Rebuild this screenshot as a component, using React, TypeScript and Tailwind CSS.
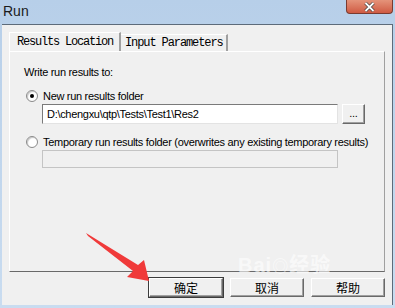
import React from "react";

const btn =
  "h-[19px] w-[74px] bg-[#f0f0f0] border border-t-white border-l-white border-r-[#696969] border-b-[#696969] shadow-[inset_-1px_-1px_0_#a0a0a0] flex items-center justify-center text-[12px] text-black";

const Radio = ({ checked }: { checked?: boolean }) => (
  <span className="w-[12px] h-[12px] rounded-full bg-white border border-[#8a8a8a] shadow-[inset_1px_1px_1px_#c8c8c8] flex items-center justify-center shrink-0">
    {checked && <span className="w-[4px] h-[4px] rounded-full bg-black" />}
  </span>
);

const App = () => {
  return (
    <div
      className="relative w-[395px] h-[308px] overflow-hidden flex flex-col bg-gradient-to-b from-[#b7cfe9] to-[#c9dcf0]"
      style={{ fontFamily: '"Liberation Sans", Arial, sans-serif' }}
    >
      {/* title bar */}
      <div className="h-[24px] flex items-start justify-between shrink-0">
        <span className="pl-[3px] pt-[3px] text-[14px] text-[#1a1a1a] leading-[16px]">Run</span>
        <div className="mr-[2px] w-[47px] h-[14px] rounded-b-[4px] bg-gradient-to-b from-[#e4937a] to-[#cf5a43] border border-t-0 border-[#7a3b30] flex items-center justify-center">
          <svg width="11" height="10" viewBox="0 0 11 10">
            <path d="M1.5 1 L9.5 9 M9.5 1 L1.5 9" stroke="#3b3b3b" strokeWidth="3.2" />
            <path d="M1.5 1 L9.5 9 M9.5 1 L1.5 9" stroke="#ffffff" strokeWidth="1.8" />
          </svg>
        </div>
      </div>

      {/* dialog body */}
      <div className="flex-1 ml-[2px] mr-[2px] mb-[3px] bg-[#f0f0f0] border-t border-r border-[#5d6b7a] flex flex-col pl-[7px] pr-[6px] pt-[7px]">
        {/* tabs */}
        <div className="flex items-end h-[19px]" style={{ fontFamily: '"Liberation Mono", "Courier New", monospace' }}>
          <div className="h-[19px] w-[112px] bg-[#f0f0f0] border-t border-l border-t-white border-l-white border-r-2 border-r-[#a0a0a0] flex items-center pl-[7px] text-[12px] tracking-[-1.2px] text-black">
            Results Location
          </div>
          <div className="h-[17px] w-[107px] bg-[#f0f0f0] border-t border-t-white border-r-2 border-r-[#a0a0a0] flex items-center pl-[4px] text-[12px] tracking-[-1.1px] text-black">
            Input Parameters
          </div>
        </div>

        {/* panel */}
        <div className="w-[376px] h-[221px] border border-t-white border-l-white border-r-[#a0a0a0] border-b-[#696969] flex flex-col pl-[14px] pt-[13px] text-[11px] tracking-[-0.3px] text-black">
          <div className="leading-[14px]">Write run results to:</div>

          <div className="flex items-center gap-[5px] mt-[10px] pl-[2px] h-[14px]">
            <Radio checked />
            <span className="leading-[14px]">New run results folder</span>
          </div>
          <div className="flex items-center gap-[4px] mt-[1px] pl-[18px]">
            <div className="w-[296px] h-[20px] bg-white border border-t-[#7a7a7a] border-l-[#7a7a7a] border-r-[#e3e3e3] border-b-[#e3e3e3] flex items-center pl-[4px] leading-[14px]">
              D:\chengxu\qtp\Tests\Test1\Res2
            </div>
            <div className="w-[23px] h-[20px] bg-[#f0f0f0] border border-t-white border-l-white border-r-[#696969] border-b-[#696969] shadow-[inset_-1px_-1px_0_#a0a0a0] flex items-center justify-center text-[11px] leading-none pb-[2px]">
              ...
            </div>
          </div>

          <div className="flex items-center gap-[5px] mt-[11px] pl-[2px] h-[14px]">
            <Radio />
            <span className="leading-[14px] whitespace-nowrap">
              Temporary run results folder (overwrites any existing temporary results)
            </span>
          </div>
          <div className="ml-[18px] mt-[1px] w-[296px] h-[18px] bg-[#f0f0f0] border border-[#c4c4c4]" />
        </div>

        {/* buttons */}
        <div
          className="flex justify-end gap-[7px] mt-[6px] pr-[1px]"
          style={{ fontFamily: '"Noto Sans CJK SC", sans-serif' }}
        >
          <div className="outline outline-1 outline-[#3c3c3c]">
            <div className={btn}>确定</div>
          </div>
          <div className={btn}>取消</div>
          <div className={btn}>帮助</div>
        </div>
      </div>

      {/* watermark */}
      <div
        className="absolute left-[238px] top-[254px] text-white/60 text-[20px] font-bold leading-[22px] tracking-[1px] pointer-events-none select-none"
        style={{ fontFamily: '"Liberation Sans", "Noto Sans CJK SC", sans-serif' }}
      >
        Bai<span className="text-[16px]">◎</span>经验
      </div>

      {/* annotation arrow */}
      <svg className="absolute left-0 top-0 pointer-events-none" width="395" height="308">
        <polygon
          points="86,233 138,265 144,260 149,281 127,277 133,271 88,236"
          fill="#f03a3a"
        />
      </svg>
    </div>
  );
};

export default App;
